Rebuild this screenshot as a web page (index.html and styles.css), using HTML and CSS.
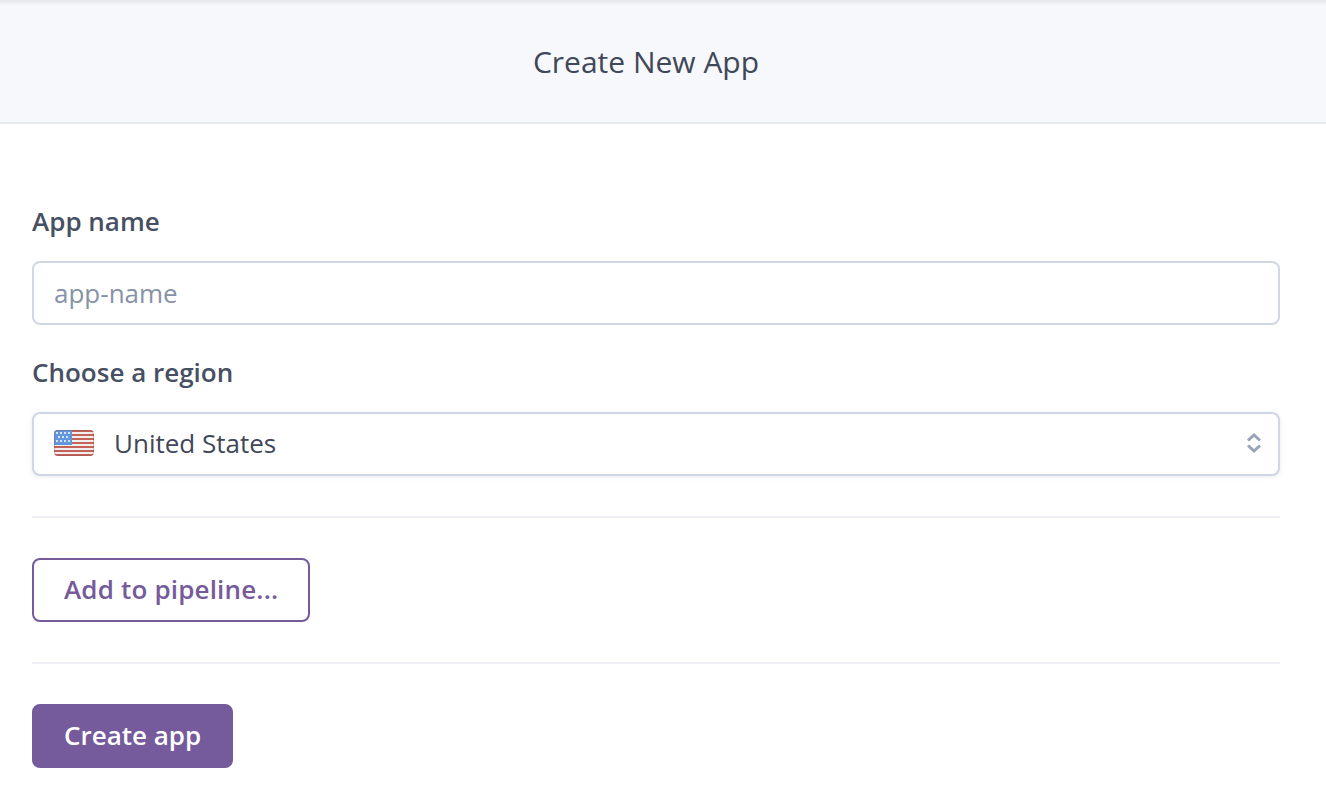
FILE: index.html
```html
<!DOCTYPE html>
<html lang="en">
<head>
<meta charset="utf-8">
<title>Create New App</title>
<link rel="stylesheet" href="styles.css">
</head>
<body>
<header class="page-header"><h1 class="page-title">Create New App</h1></header>
<main class="form">
  <section class="field">
    <label class="label" for="app-name">App name</label>
    <input class="input" id="app-name" type="text" placeholder="app-name">
  </section>
  <section class="field field-region">
    <span class="label">Choose a region</span>
    <div class="select">
      <svg class="flag" width="40" height="26" viewBox="0 0 40 26" aria-hidden="true">
        <defs><clipPath id="flag-clip"><rect width="40" height="26" rx="4"/></clipPath></defs>
        <g clip-path="url(#flag-clip)">
          <rect width="40" height="26" fill="#f3eeee"/>
          <path d="M0 1h40M0 5h40M0 9h40M0 13h40M0 17h40M0 21h40M0 25h40" stroke="#c4625a" stroke-width="2"/>
          <rect width="18" height="15" fill="#6197de"/>
          <g fill="#d5e4f7">
            <rect x="2" y="2" width="2" height="2"/><rect x="6" y="2" width="2" height="2"/><rect x="10" y="2" width="2" height="2"/><rect x="14" y="2" width="2" height="2"/>
            <rect x="4" y="6" width="2" height="2"/><rect x="8" y="6" width="2" height="2"/><rect x="12" y="6" width="2" height="2"/>
            <rect x="2" y="10" width="2" height="2"/><rect x="6" y="10" width="2" height="2"/><rect x="10" y="10" width="2" height="2"/><rect x="14" y="10" width="2" height="2"/>
          </g>
          <rect x="0.5" y="0.5" width="39" height="25" rx="3.5" fill="none" stroke="#8a4a48" stroke-opacity="0.35"/>
        </g>
      </svg>
      <span class="select-value">United States</span>
      <svg class="chevrons" width="16" height="22" viewBox="0 0 16 22" aria-hidden="true">
        <path d="M2 8.5l6-5.5 6 5.5M2 13.5l6 5.5 6-5.5" fill="none" stroke="#97a3b6" stroke-width="3"/>
      </svg>
    </div>
  </section>
  <hr class="rule">
  <button class="btn btn-outline" type="button">Add to pipeline...</button>
  <hr class="rule">
  <button class="btn btn-solid" type="button">Create app</button>
</main>
</body>
</html>
```
FILE: styles.css
```css
* { box-sizing: border-box; }
html, body { margin: 0; padding: 0; background: #fff; }
body {
  height: 792px;
  overflow: hidden;
  font-family: "Open Sans", "Noto Sans", sans-serif;
  color: #3f4758;
}
.page-header {
  height: 124px;
  display: flex;
  align-items: center;
  justify-content: center;
  padding: 2px 34px 0 0;
  background: linear-gradient(#e6e7eb 0, #f7f8fb 6px);
  border-bottom: 2px solid #e8eaf1;
}
.page-title {
  margin: 0;
  font-size: 30px;
  line-height: 36px;
  font-weight: 400;
  color: #3f4758;
}
.form { padding: 80px 46px 0 32px; }
.field { display: flex; flex-direction: column; }
.field-region { margin-top: 30px; }
.label {
  font-size: 26px;
  line-height: 34px;
  font-weight: 600;
  color: #465062;
  margin-bottom: 23px;
}
.input, .select {
  width: 100%;
  height: 64px;
  border: 2px solid #cfd7e6;
  border-radius: 8px;
  background: #fff;
  font: inherit;
  font-size: 26px;
}
.input { padding: 0 20px; color: #3f4758; outline: none; }
.input::placeholder { color: #8692a6; opacity: 1; }
.select {
  display: flex;
  align-items: center;
  padding: 0 16px 2px 20px;
  box-shadow: 0 1px 4px rgba(89, 105, 129, 0.15);
}
.flag { flex: none; }
.select-value { flex: 1; margin-left: 20px; color: #3f4758; }
.chevrons { flex: none; }
.rule {
  margin: 40px 0;
  border: 0;
  border-top: 2px solid #eff0f5;
}
.btn {
  display: block;
  height: 64px;
  border-radius: 8px;
  padding: 0 30px 2px;
  font: inherit;
  font-size: 26px;
  font-weight: 600;
  cursor: pointer;
}
.btn-outline { background: #fff; color: #755b9b; border: 2px solid #755b9b; letter-spacing: 0.17px; }
.btn-solid { background: #755b9b; color: #fff; border: 2px solid #755b9b; }
```
